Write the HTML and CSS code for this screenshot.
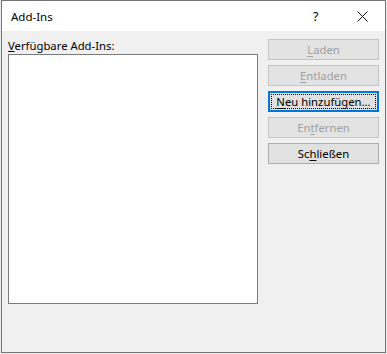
FILE: index.html
```html
<!DOCTYPE html>
<html lang="de">
<head>
<meta charset="utf-8">
<title>Add-Ins</title>
<link rel="stylesheet" href="styles.css">
</head>
<body>
<div class="window">
  <div class="titlebar">
    <span class="title">Add-Ins</span>
    <span class="help">?</span>
    <span class="close">
      <svg width="11" height="11" viewBox="0 0 11 11"><path d="M0.5 0.5 L10.5 10.5 M10.5 0.5 L0.5 10.5" stroke="#111" stroke-width="1" fill="none"/></svg>
    </span>
  </div>
  <div class="body">
    <div class="left">
      <div class="label"><u>V</u>erfügbare Add-Ins:</div>
      <div class="listbox"></div>
    </div>
    <div class="buttons">
      <div class="btn disabled"><u>L</u>aden</div>
      <div class="btn disabled"><u>E</u>ntladen</div>
      <div class="btn default"><span class="focus"><u>N</u>eu hinzufügen...</span></div>
      <div class="btn disabled">En<u>t</u>fernen</div>
      <div class="btn">Sc<u>h</u>ließen</div>
    </div>
  </div>
</div>
</body>
</html>
```
FILE: styles.css
```css
html, body {
  margin: 0;
  padding: 0;
  background: #ececec;
}
body {
  width: 387px;
  height: 354px;
  overflow: hidden;
  font-family: "Noto Sans", "Open Sans", sans-serif;
  font-size: 11.3px;
  color: #000;
}
.window {
  box-sizing: border-box;
  margin-left: 1px;
  width: 385px;
  height: 353px;
  border: 1px solid #747474;
  background: #f0f0f0;
  display: flex;
  flex-direction: column;
}
.titlebar {
  height: 30px;
  background: #fff;
  display: flex;
  align-items: center;
  padding-left: 9px;
}
.title {
  flex: 1;
  font-size: 11.5px;
  color: #000;
}
.help {
  width: 10px;
  font-size: 12.5px;
  margin-right: 34px;
}
.close {
  width: 11px;
  height: 11px;
  margin-right: 17px;
  display: flex;
}
.body {
  flex: 1;
  display: flex;
  padding: 7px 0 0 6px;
  gap: 10px;
}
.left {
  display: flex;
  flex-direction: column;
}
.label {
  line-height: 15px;
  height: 15px;
  margin-bottom: 1px;
}
.listbox {
  box-sizing: border-box;
  width: 250px;
  height: 250px;
  background: #fff;
  border: 1px solid #7a7a7a;
}
.buttons {
  display: flex;
  flex-direction: column;
  gap: 5px;
  padding-top: 1px;
}
.btn {
  box-sizing: border-box;
  width: 111px;
  height: 21px;
  border: 1px solid #adadad;
  background: #e1e1e1;
  display: flex;
  align-items: center;
  justify-content: center;
  line-height: 15px;
}
.btn u {
  text-underline-offset: 2px;
}
.btn.disabled {
  border-color: #c4c4c4;
  background: #e3e3e3;
  color: #a0a0a0;
}
.btn.default {
  border: 2px solid #0078d7;
  padding: 1px;
}
.btn.default .focus {
  flex: 1;
  align-self: stretch;
  border: 1px dotted #000;
  display: flex;
  align-items: center;
  justify-content: center;
}
```
